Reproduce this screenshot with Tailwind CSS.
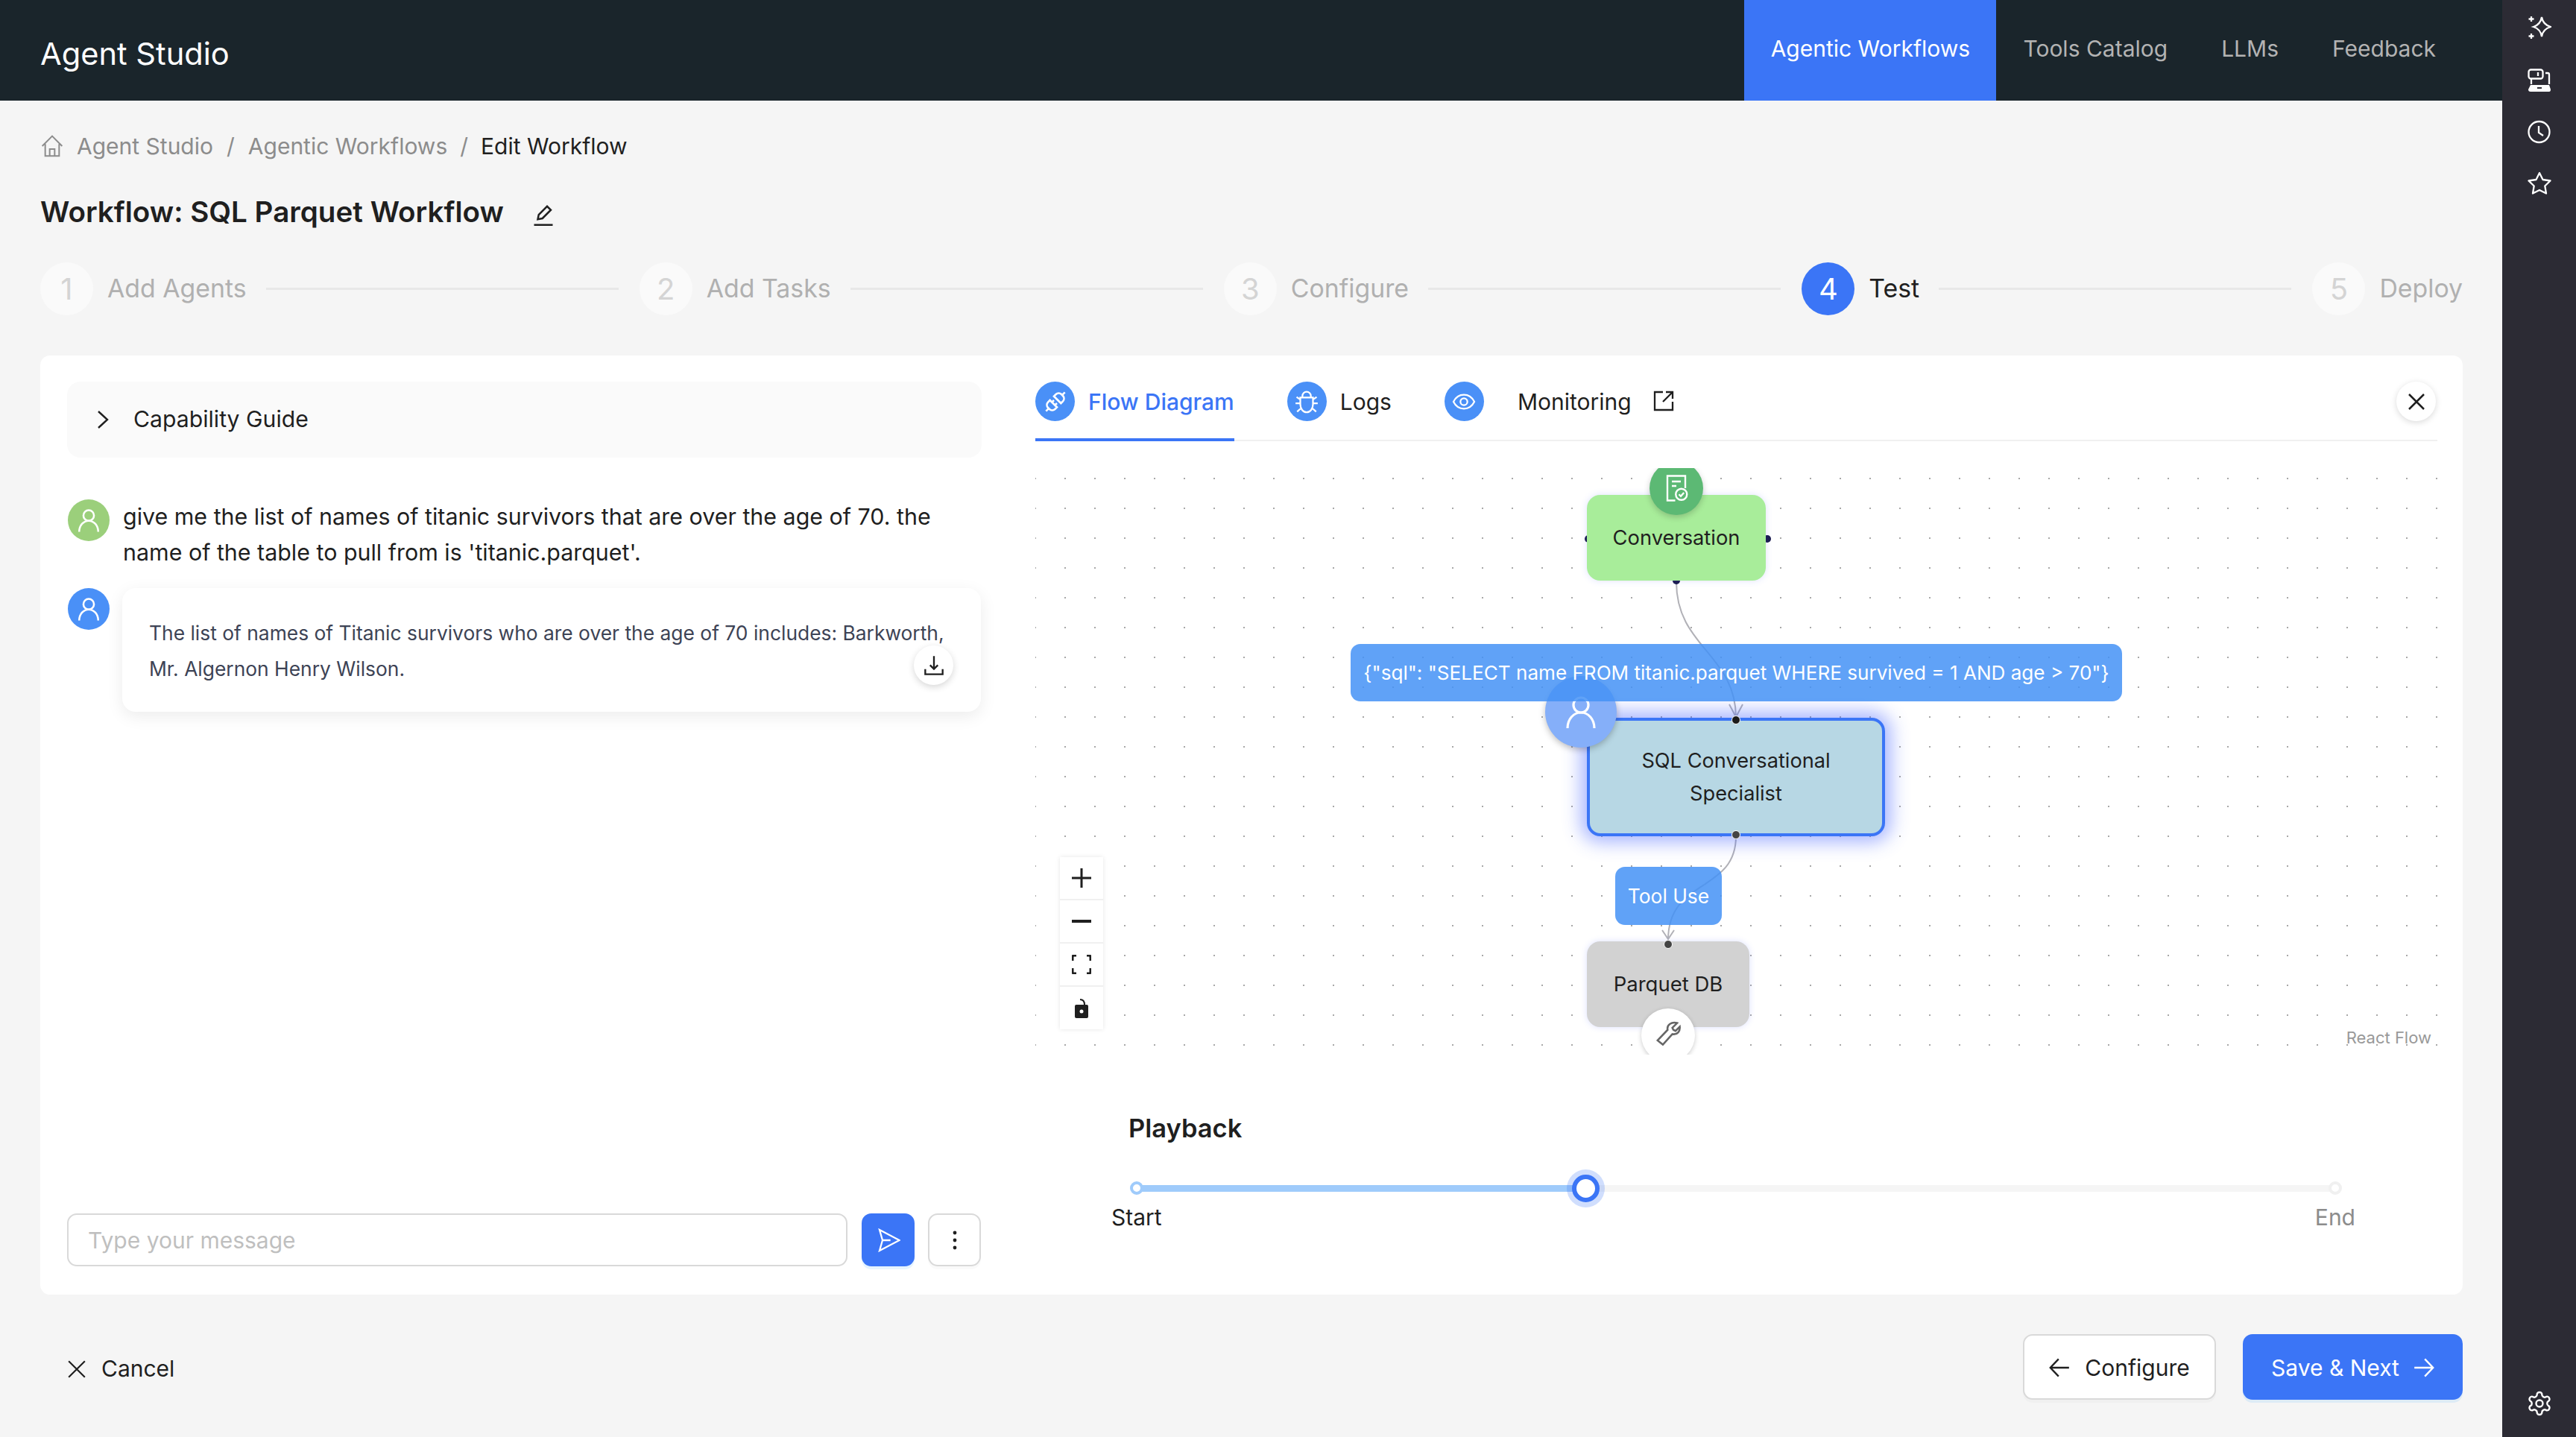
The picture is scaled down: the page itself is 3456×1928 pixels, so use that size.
<!doctype html>
<html>
<head>
<meta charset="utf-8">
<script src="https://cdn.jsdelivr.net/npm/@tailwindcss/browser@4"></script>
<title>Agent Studio</title>
</head>
<body class="m-0 bg-[#f5f5f5] font-['Inter','Liberation_Sans',sans-serif] text-[30px] text-[#1f1f1f]">
<div class="flex h-[1928px] w-[3456px] overflow-hidden">
  <div class="flex w-[3357px] flex-col">
    <header class="flex h-[135px] shrink-0 items-stretch justify-between bg-[#1a252b]">
      <div class="flex items-center pl-[54px] pt-[9px] text-[41.6px] text-white">Agent Studio</div>
      <nav class="flex pr-[89px] text-[#b3b3b3]">
        <div class="flex w-[338px] justify-center bg-[#3b75f6] pt-[43px] text-white">Agentic Workflows</div>
        <div class="px-[36px] pt-[43px]">Tools Catalog</div>
        <div class="px-[36px] pt-[43px]">LLMs</div>
        <div class="pl-[36px] pt-[43px]">Feedback</div>
      </nav>
    </header>

    <main class="flex flex-1 flex-col pl-[54px] pr-[53px]">
      <div class="flex h-[48px] mt-[37px] items-center text-[#8c8c8c]">
        <svg class="mr-[17px] h-[32px] w-[32px]" viewBox="0 0 24 24" fill="none" stroke="#8c8c8c" stroke-width="1.5"><path d="M2 12 12 2l10 10M5 10v12h14V10M9.5 22v-7h5v7"/></svg>
        <span>Agent Studio</span><span class="mx-[18px]">/</span><span>Agentic Workflows</span><span class="mx-[17px]">/</span><span class="text-[#1f1f1f]">Edit Workflow</span>
      </div>

      <div class="mt-[38px] flex h-[54px] items-center">
        <span class="text-[38.6px] font-semibold">Workflow: SQL Parquet Workflow</span>
        <svg class="ml-[38px] mt-[6px] h-[30px] w-[30px]" viewBox="0 0 24 24" fill="none" stroke="#1f1f1f" stroke-width="2"><path d="M6 17l1-5L16 3l4 4-9 9-5 1zM2 23h20"/></svg>
      </div>

      <div class="mt-[40px] flex h-[71px] items-center text-[33.8px] text-[#b0b0b0]">
        <div class="flex h-[71px] w-[71px] shrink-0 items-center justify-center rounded-full bg-[#fafafa] text-[40px] text-[#d4d4d4]">1</div>
        <span class="ml-[19px]">Add Agents</span><div class="ml-[26px] mr-[28px] h-[3px] flex-1 bg-[#e8e8e8]"></div>
        <div class="flex h-[71px] w-[71px] shrink-0 items-center justify-center rounded-full bg-[#fafafa] text-[40px] text-[#d4d4d4]">2</div>
        <span class="ml-[19px]">Add Tasks</span><div class="ml-[26px] mr-[28px] h-[3px] flex-1 bg-[#e8e8e8]"></div>
        <div class="flex h-[71px] w-[71px] shrink-0 items-center justify-center rounded-full bg-[#fafafa] text-[40px] text-[#d4d4d4]">3</div>
        <span class="ml-[19px]">Configure</span><div class="ml-[26px] mr-[28px] h-[3px] flex-1 bg-[#e8e8e8]"></div>
        <div class="flex h-[71px] w-[71px] shrink-0 items-center justify-center rounded-full bg-[#3b75f6] text-[40px] text-white">4</div>
        <span class="ml-[19px] text-[#1f1f1f]">Test</span><div class="ml-[26px] mr-[28px] h-[3px] flex-1 bg-[#e8e8e8]"></div>
        <div class="flex h-[71px] w-[71px] shrink-0 items-center justify-center rounded-full bg-[#fafafa] text-[40px] text-[#d4d4d4]">5</div>
        <span class="ml-[19px]">Deploy</span>
      </div>

      <section class="mt-[54px] flex h-[1260px] rounded-[13px] bg-white">
        <div class="flex w-[1335px] shrink-0 flex-col pl-[36px] pr-[73px] pt-[35px]">
          <div class="flex h-[102px] w-[1227px] items-center rounded-[18px] bg-[#fafafa] pl-[40px]">
            <svg class="h-[26px] w-[16px]" viewBox="0 0 16 26" fill="none" stroke="#1f1f1f" stroke-width="2.4"><path d="M2 2l12 11L2 24"/></svg>
            <span class="ml-[33px] text-[30.2px]">Capability Guide</span>
          </div>
          <div class="ml-[1px] mt-[56px] flex w-[1226px]">
            <div class="flex h-[56px] w-[56px] shrink-0 items-center justify-center rounded-full bg-[#9bcf7b]">
              <svg class="h-[34px] w-[34px]" viewBox="0 0 24 24" fill="none" stroke="#fff" stroke-width="1.8"><circle cx="12" cy="7.5" r="5"/><path d="M3 23c0-6 4-10.500 9-10.500S21 17 21 23"/></svg>
            </div>
            <p class="ml-[18px] mt-[-1px] w-[1130px] text-[30.4px] leading-[48px]">give me the list of names of titanic survivors that are over the age of 70. the name of the table to pull from is 'titanic.parquet'.</p>
          </div>
          <div class="ml-[1px] mt-[24px] flex w-[1226px]">
            <div class="flex h-[56px] w-[56px] shrink-0 items-center justify-center rounded-full bg-[#4a90f7]">
              <svg class="h-[34px] w-[34px]" viewBox="0 0 24 24" fill="none" stroke="#fff" stroke-width="1.8"><circle cx="12" cy="7.5" r="5"/><path d="M3 23c0-6 4-10.500 9-10.500S21 17 21 23"/></svg>
            </div>
            <div class="relative ml-[17px] h-[166px] w-[1152px] rounded-[18px] bg-white pl-[36px] pr-[45px] pt-[36px] text-[26.4px] leading-[48px] text-[#3d4355] shadow-[0_6px_22px_rgba(0,0,0,0.08)]">
              <p>The list of names of Titanic survivors who are over the age of 70 includes: Barkworth, Mr. Algernon Henry Wilson.</p>
              <div class="absolute left-[1062px] top-[77px] flex h-[53px] w-[53px] items-center justify-center rounded-full bg-white shadow-[0_3px_10px_rgba(0,0,0,0.16)]">
                <svg class="h-[28px] w-[28px]" viewBox="0 0 24 24" fill="none" stroke="#1f1f1f" stroke-width="2"><path d="M12 1v15M7.500 11.500 12 16l4.500-4.500M2 16v6h20v-6"/></svg>
              </div>
            </div>
          </div>
          <div class="mt-auto mb-[38px] flex w-[1226px] items-center">
            <div class="flex h-[71px] w-[1047px] items-center rounded-[13px] border-2 border-[#d9d9d9] pl-[26px] pt-[1px] text-[#bfbfbf]">Type your message</div>
            <div class="ml-[19px] flex h-[71px] w-[71px] items-center justify-center rounded-[13px] bg-[#3b75f6] shadow-[0_4px_0_rgba(5,145,255,0.1)]">
              <svg class="h-[32px] w-[32px]" viewBox="0 0 24 24" fill="none" stroke="#fff" stroke-width="1.7"><path d="M3 1.500 23 12 3 22.500 6 12zM6 12h8"/></svg>
            </div>
            <div class="ml-[18px] flex h-[71px] w-[71px] items-center justify-center rounded-[13px] border-2 border-[#d9d9d9] shadow-[0_4px_0_rgba(0,0,0,0.02)]">
              <svg class="h-[28px] w-[8px]" viewBox="0 0 8 28" fill="#1f1f1f"><circle cx="4" cy="4" r="2.400"/><circle cx="4" cy="14" r="2.400"/><circle cx="4" cy="24" r="2.400"/></svg>
            </div>
          </div>
        </div>

        <div class="flex flex-1 flex-col">
          <div class="relative ml-0 mr-[34px] mt-[35px] flex h-[80px] w-[1881px] border-b-[2px] border-[#f0f0f0]">
            <div class="relative flex h-[78px] items-start">
              <span class="flex h-[53px] w-[53px] items-center justify-center rounded-full bg-[#4a90f7]">
                <svg class="h-[32px] w-[32px]" viewBox="0 0 24 24" fill="none" stroke="#fff" stroke-width="2"><path d="M2.500 21.500l3-3M21.500 2.500l-3 3M6.500 10.500l7 7-2 2a4 4 0 0 1-5.500 0l-1.500-1.500a4 4 0 0 1 0-5.500zM17.500 13.500l-7-7 2-2a4 4 0 0 1 5.500 0l1.500 1.500a4 4 0 0 1 0 5.500zM10.500 10.500l-2 2M13.500 13.500l-2 2"/></svg>
              </span>
              <span class="ml-[18px] mt-[5px] font-medium text-[#3b75f6]">Flow Diagram</span>
              <div class="absolute bottom-[-2px] left-0 right-0 h-[4px] bg-[#3b75f6]"></div>
            </div>
            <div class="ml-[71px] flex items-start">
              <span class="flex h-[53px] w-[53px] items-center justify-center rounded-full bg-[#4a90f7]">
                <svg class="h-[34px] w-[34px]" viewBox="0 0 24 24" fill="none" stroke="#fff" stroke-width="1.600"><path d="M8 8V6.500a4 4 0 0 1 8 0V8M6 8h12v6.500c0 4-2.500 7.500-6 7.500s-6-3.500-6-7.500zM1.500 13.500H6M18 13.500h4.500M2.500 7.500 6 10M21.500 7.500 18 10M3 21.500 6.800 18M21 21.500 17.200 18"/></svg>
              </span>
              <span class="ml-[18px] mt-[5px]">Logs</span>
            </div>
            <div class="ml-[71px] flex items-start">
              <span class="flex h-[53px] w-[53px] items-center justify-center rounded-full bg-[#4a90f7]">
                <svg class="h-[32px] w-[32px]" viewBox="0 0 24 24" fill="none" stroke="#fff" stroke-width="1.700"><path d="M1.500 12C4 7 7.500 5 12 5s8 2 10.500 7c-2.500 5-6 7-10.500 7s-8-2-10.500-7z"/><circle cx="12" cy="12" r="3.500"/></svg>
              </span>
              <span class="ml-[45px] mt-[5px]">Monitoring</span>
              <svg class="ml-[29px] mt-[12px] h-[28px] w-[28px]" viewBox="0 0 28 28" fill="none" stroke="#1f1f1f" stroke-width="2.300"><path d="M13 2H2v24h24V15M17 2h9v9M26 2 13 15"/></svg>
            </div>
            <div class="absolute right-[2px] top-0 flex h-[53px] w-[53px] items-center justify-center rounded-full bg-white shadow-[0_2px_8px_rgba(0,0,0,0.15)]">
              <svg class="h-[24px] w-[24px]" viewBox="0 0 24 24" fill="none" stroke="#1f1f1f" stroke-width="2.500"><path d="M2 2l20 20M22 2 2 22"/></svg>
            </div>
          </div>

          <div class="relative mt-[36px] h-[787px] w-[1881px] overflow-hidden bg-[radial-gradient(circle,#a8a8a8_1.2px,transparent_1.4px)] bg-[size:40px_40px] bg-[position:-20px_-6px]">
            <svg class="absolute left-0 top-0 h-[787px] w-[1881px]" viewBox="0 0 1881 787" fill="none" stroke="#b1b1b7" stroke-width="2">
              <path d="M860 153 C860 240 940 250 940 335"/>
              <path d="M931 317 940 334 949 317"/>
              <path d="M940 494 C940 570 849 550 849 633"/>
              <path d="M841 620 849 632 857 620"/>
            </svg>
            <!-- handles -->
            <div class="absolute left-[737px] top-[90px] h-[10px] w-[10px] rounded-full bg-[#1a1a4b]"></div>
            <div class="absolute left-[977px] top-[90px] h-[10px] w-[10px] rounded-full bg-[#1a1a4b]"></div>
            <div class="absolute left-[855px] top-[146px] h-[10px] w-[10px] rounded-full bg-[#1a1a4b]"></div>
            <!-- conversation -->
            <div class="absolute left-[740px] top-[36px] flex h-[115px] w-[240px] items-center justify-center rounded-[18px] bg-[#a8ed9a] pt-[2px] text-[27.300px] shadow-[0_0_10px_rgba(80,100,255,0.18)]">Conversation</div>
            <div class="absolute left-[824px] top-[-9px] flex h-[72px] w-[72px] items-center justify-center rounded-full bg-[#5cb974] shadow-[0_3px_8px_rgba(0,0,0,0.2)]">
              <svg class="h-[36px] w-[36px]" viewBox="0 0 24 24" fill="none" stroke="#fff" stroke-width="1.600"><path d="M11 23H4V1h16v11M8 6h8M8 10h4"/><circle cx="16.500" cy="17.500" r="5"/><path d="M14.300 17.500l1.700 1.700 2.800-3.200"/></svg>
            </div>
            <!-- sql -->
            <div class="absolute left-[740px] top-[335px] flex h-[159px] w-[400px] items-center justify-center rounded-[18px] border-[4px] border-[#3b75f6] bg-[#b7d7e4] pt-[1px] text-center text-[27.200px] leading-[44px] shadow-[0_0_24px_8px_rgba(60,90,255,0.45)]">SQL Conversational<br>Specialist</div>
            <div class="absolute left-[684px] top-[279px] flex h-[96px] w-[96px] items-center justify-center rounded-full bg-[#85aff9] shadow-[0_3px_8px_rgba(0,0,0,0.25)]">
              <svg class="h-[48px] w-[48px]" viewBox="0 0 24 24" fill="none" stroke="#fff" stroke-width="1.600"><circle cx="12" cy="7.500" r="5"/><path d="M3 23c0-6 4-10.500 9-10.500S21 17 21 23"/></svg>
            </div>
            <div class="absolute left-[934px] top-[332px] h-[12px] w-[12px] rounded-full border-[1px] border-white bg-[#1a1a1a]"></div>
            <div class="absolute left-[934px] top-[486px] h-[12px] w-[12px] rounded-full border-[1px] border-white bg-[#444]"></div>
            <!-- label -->
            <div class="absolute left-[423px] top-[236px] flex h-[77px] w-[1035px] items-center justify-center rounded-[13px] bg-[#4492f6]/85 text-[26.100px] text-white">{"sql": "SELECT name FROM titanic.parquet WHERE survived = 1 AND age &gt; 70"}</div>
            <div class="absolute left-[778px] top-[535px] flex h-[78px] w-[143px] items-center justify-center rounded-[13px] bg-[#4492f6]/85 pt-[1px] text-[26.400px] text-white">Tool Use</div>
            <!-- parquet -->
            <div class="absolute left-[740px] top-[635px] flex h-[115px] w-[218px] items-center justify-center rounded-[18px] bg-[#d2d2d2] pt-[1px] text-[27.500px] shadow-[0_0_8px_rgba(80,100,255,0.2)]">Parquet DB</div>
            <div class="absolute left-[843px] top-[633px] h-[12px] w-[12px] rounded-full border-[1px] border-white bg-[#444]"></div>
            <div class="absolute left-[813px] top-[725px] flex h-[72px] w-[72px] items-center justify-center rounded-full bg-white shadow-[0_2px_6px_rgba(0,0,0,0.2)]">
              <svg class="mb-[6px] h-[34px] w-[34px]" viewBox="0 0 24 24" fill="none" stroke="#666" stroke-width="1.800"><path d="M20.500 2.500 16 7l1 2 2 1 4-4c.5 4-2 8-7 7L7 23l-5-4 9.500-10c-1-5 4-8 9-6.500z"/></svg>
            </div>
            <!-- controls -->
            <div class="absolute left-[33px] top-[522px] flex w-[58px] flex-col bg-[#f0f0f0] gap-[2px] shadow-[0_0_6px_rgba(0,0,0,0.1)]">
              <div class="flex h-[56px] items-center justify-center bg-white"><svg class="h-[26px] w-[26px]" viewBox="0 0 26 26" fill="none" stroke="#1f1f1f" stroke-width="3"><path d="M13 0v26M0 13h26"/></svg></div>
              <div class="flex h-[56px] items-center justify-center bg-white"><svg class="h-[26px] w-[26px]" viewBox="0 0 26 26" fill="none" stroke="#1f1f1f" stroke-width="4"><path d="M0 13h26"/></svg></div>
              <div class="flex h-[56px] items-center justify-center bg-white"><svg class="h-[26px] w-[26px]" viewBox="0 0 26 26" fill="none" stroke="#1f1f1f" stroke-width="3"><path d="M1 8V3q0-2 2-2h3M20 1h3q2 0 2 2v5M1 18v5q0 2 2 2h3M20 25h3q2 0 2-2v-5"/></svg></div>
              <div class="flex h-[57px] items-center justify-center bg-white"><svg class="h-[28px] w-[22px]" viewBox="0 0 22 28"><path fill="none" stroke="#1f1f1f" stroke-width="2" d="M9 2c4 0 6 2 6 7"/><rect x="2" y="9" width="18" height="18" rx="2" fill="#1f1f1f"/><circle cx="11" cy="18" r="2.500" fill="#fff"/></svg></div>
            </div>
            <div class="absolute bottom-[6px] right-[8px] text-[22px] text-[#999]">React Flow</div>
          </div>

          <div class="pl-[125px] pt-[75px] text-[34.500px] font-semibold leading-[48px]">Playback</div>
          <div class="relative mt-[52px] h-[9px] w-[1881px]">
            <div class="absolute left-[135px] top-0 h-[9px] w-[1606px] bg-[#f5f5f5]"></div>
            <div class="absolute left-[135px] top-0 h-[9px] w-[604px] bg-[#9fcbfb]"></div>
            <div class="absolute left-[127px] top-[-5px] h-[18px] w-[18px] rounded-full border-[4px] border-[#9fcbfb] bg-white"></div>
            <div class="absolute left-[1735px] top-[-5px] h-[18px] w-[18px] rounded-full border-[4px] border-[#f0f0f0] bg-white"></div>
            <div class="absolute left-[720px] top-[-14px] h-[37px] w-[37px] rounded-full border-[6px] border-[#3b75f6] bg-white shadow-[0_0_0_7px_rgba(59,117,246,0.24)]"></div>
          </div>
          <div class="mt-[14px] flex w-[1881px] justify-between pl-[102px] pr-[110px] leading-[40px]"><span>Start</span><span class="text-[#8c8c8c]">End</span></div>
        </div>
      </section>

      <div class="mt-[53px] flex h-[92px] items-start justify-between">
        <div class="ml-[36px] mt-[24px] flex items-center">
          <svg class="h-[26px] w-[26px]" viewBox="0 0 24 24" fill="none" stroke="#1f1f1f" stroke-width="2"><path d="M2 2l20 20M22 2 2 22"/></svg>
          <span class="ml-[20px]">Cancel</span>
        </div>
        <div class="flex">
          <div class="flex h-[88px] w-[259px] items-center justify-center rounded-[13px] border-2 border-[#d9d9d9] bg-white pt-[2px] shadow-[0_4px_0_rgba(0,0,0,0.02)]">
            <svg class="h-[28px] w-[28px]" viewBox="0 0 24 24" fill="none" stroke="#1f1f1f" stroke-width="2"><path d="M23 12H2M11 2 1.500 12 11 22"/></svg>
            <span class="ml-[20px]">Configure</span>
          </div>
          <div class="ml-[36px] flex h-[88px] w-[295px] items-center justify-center rounded-[13px] bg-[#3b75f6] pt-[2px] text-white shadow-[0_4px_0_rgba(5,145,255,0.1)]">
            <span>Save &amp; Next</span>
            <svg class="ml-[19px] h-[28px] w-[28px]" viewBox="0 0 24 24" fill="none" stroke="#fff" stroke-width="2"><path d="M1 12h21M13 2l9.500 10L13 22"/></svg>
          </div>
        </div>
      </div>
    </main>
  </div>

  <aside class="flex w-[99px] shrink-0 flex-col items-center bg-[#2c2b34]">
    <svg class="mt-[21px] h-[32px] w-[32px]" viewBox="0 0 32 32" fill="none" stroke="#fff" stroke-width="2.300"><path d="M19 2c1 6 5 11 12 13-7 2-11 6-12 13-1-7-5-11-11-13 6-2 10-7 11-13zM5 1v7M1.500 4.500h7M5 24v7M1.500 27.500h7"/></svg>
    <svg class="mt-[39px] h-[32px] w-[32px]" viewBox="0 0 32 32"><g fill="none" stroke="#fff" stroke-width="2.300"><rect x="1.500" y="1.500" width="19" height="12" rx="3"/><path d="M14 5v5M24 6h3q2 0 2 2v13M5 14v7"/></g><path fill="#fff" d="M4 22h25l2 6q0 3-2 3H4q-3 0-3-3z"/><rect x="13" y="25" width="6" height="2" fill="#2c2b34"/></svg>
    <svg class="mt-[37px] h-[32px] w-[32px]" viewBox="0 0 32 32" fill="none" stroke="#fff" stroke-width="2.300"><circle cx="15.500" cy="16" r="14"/><path d="M15 8v9l6 4"/></svg>
    <svg class="mt-[37px] h-[32px] w-[32px]" viewBox="0 0 32 32" fill="none" stroke="#fff" stroke-width="2.300" stroke-linejoin="round"><path d="M16 2l4.500 9 10 1.500-7.200 7 1.700 10L16 25l-9 4.500 1.700-10-7.200-7 10-1.500z"/></svg>
    <svg class="mb-[27px] mt-auto h-[36px] w-[36px]" viewBox="0 0 24 24" fill="none" stroke="#fff" stroke-width="1.600"><path d="M12.220 2h-.44a2 2 0 0 0-2 2v.18a2 2 0 0 1-1 1.730l-.43.250a2 2 0 0 1-2 0l-.15-.08a2 2 0 0 0-2.730.730l-.22.380a2 2 0 0 0 .730 2.730l.15.100a2 2 0 0 1 1 1.720v.510a2 2 0 0 1-1 1.740l-.15.090a2 2 0 0 0-.730 2.730l.22.380a2 2 0 0 0 2.730.730l.15-.08a2 2 0 0 1 2 0l.43.250a2 2 0 0 1 1 1.730V20a2 2 0 0 0 2 2h.44a2 2 0 0 0 2-2v-.18a2 2 0 0 1 1-1.730l.43-.25a2 2 0 0 1 2 0l.15.08a2 2 0 0 0 2.730-.730l.22-.39a2 2 0 0 0-.730-2.730l-.15-.08a2 2 0 0 1-1-1.740v-.5a2 2 0 0 1 1-1.740l.15-.09a2 2 0 0 0 .730-2.730l-.22-.38a2 2 0 0 0-2.730-.730l-.15.08a2 2 0 0 1-2 0l-.43-.25a2 2 0 0 1-1-1.730V4a2 2 0 0 0-2-2z"/><circle cx="12" cy="12" r="3"/></svg>
  </aside>
</div>
</body>
</html>
